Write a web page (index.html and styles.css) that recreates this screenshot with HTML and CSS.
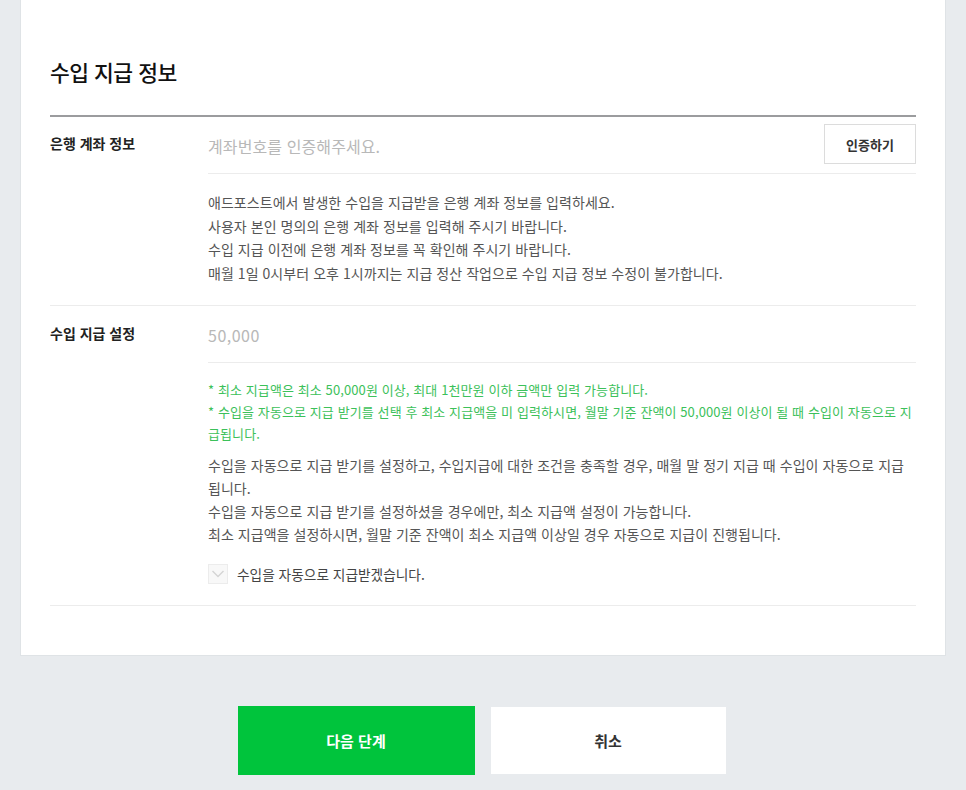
FILE: index.html
```html
<!DOCTYPE html>
<html lang="ko">
<head>
<meta charset="utf-8">
<link rel="stylesheet" href="styles.css">
</head>
<body>
<div class="card">
  <h2 class="title">수입 지급 정보</h2>
  <div class="rows">
    <div class="row">
      <div class="label">은행 계좌 정보</div>
      <div class="field">
        <div class="input-line">
          <span class="placeholder">계좌번호를 인증해주세요.</span>
          <button class="verify">인증하기</button>
        </div>
        <div class="desc">
          <p>애드포스트에서 발생한 수입을 지급받을 은행 계좌 정보를 입력하세요.</p>
          <p>사용자 본인 명의의 은행 계좌 정보를 입력해 주시기 바랍니다.</p>
          <p>수입 지급 이전에 은행 계좌 정보를 꼭 확인해 주시기 바랍니다.</p>
          <p>매월 1일 0시부터 오후 1시까지는 지급 정산 작업으로 수입 지급 정보 수정이 불가합니다.</p>
        </div>
      </div>
    </div>
    <div class="row">
      <div class="label">수입 지급 설정</div>
      <div class="field">
        <div class="input-line amount">
          <span class="placeholder">50,000</span>
        </div>
        <div class="notes">
          <p>* 최소 지급액은 최소 50,000원 이상, 최대 1천만원 이하 금액만 입력 가능합니다.</p>
          <p>* 수입을 자동으로 지급 받기를 선택 후 최소 지급액을 미 입력하시면, 월말 기준 잔액이 50,000원 이상이 될 때 수입이 자동으로 지급됩니다.</p>
        </div>
        <div class="desc desc2">
          <p>수입을 자동으로 지급 받기를 설정하고, 수입지급에 대한 조건을 충족할 경우, 매월 말 정기 지급 때 수입이 자동으로 지급됩니다.</p>
          <p>수입을 자동으로 지급 받기를 설정하셨을 경우에만, 최소 지급액 설정이 가능합니다.</p>
          <p>최소 지급액을 설정하시면, 월말 기준 잔액이 최소 지급액 이상일 경우 자동으로 지급이 진행됩니다.</p>
        </div>
        <label class="check">
          <span class="box"><svg width="14" height="10" viewBox="0 0 14 10"><path d="M1.5 2 L7 7.5 L12.5 2" fill="none" stroke="#d4d4d4" stroke-width="1.4"/></svg></span>
          <span class="check-text">수입을 자동으로 지급받겠습니다.</span>
        </label>
      </div>
    </div>
  </div>
</div>
<div class="actions">
  <button class="btn primary">다음 단계</button>
  <button class="btn secondary">취소</button>
</div>
</body>
</html>
```
FILE: styles.css
```css
* { box-sizing: border-box; }
html, body { margin: 0; padding: 0; }
body {
  background: #e8ebee;
  font-family: "Noto Sans CJK KR", "Noto Sans", "Liberation Sans", sans-serif;
  color: #333;
  width: 966px;
  height: 790px;
  overflow: hidden;
}
p { margin: 0; }
.card {
  margin-left: 20px;
  width: 926px;
  background: #fff;
  border-left: 1px solid #dfe3e6;
  border-right: 1px solid #dfe3e6;
  border-bottom: 1px solid #dfe3e6;
  padding: 56px 29px 49px 29px;
}
.title {
  margin: 0;
  font-size: 21.5px;
  line-height: 32px;
  font-weight: 500;
  color: #111;
  letter-spacing: -0.5px;
}
.rows {
  margin-top: 27px;
  border-top: 2px solid #9b9c9e;
}
.row {
  display: flex;
  border-bottom: 1px solid #ececec;
}
.label {
  width: 158px;
  flex: none;
  padding-top: 16px;
  font-size: 14px;
  line-height: 20px;
  font-weight: 700;
  color: #222;
}
.row:nth-child(2) .label { padding-top: 17px; }
.field { flex: 1; }
.input-line {
  height: 57px;
  display: flex;
  align-items: center;
  justify-content: space-between;
  border-bottom: 1px solid #ececec;
}
.placeholder {
  font-size: 16px;
  color: #b8b8b8;
  padding-top: 1px;
  letter-spacing: 0.1px;
}
.amount .placeholder { letter-spacing: 0.5px; }
.verify {
  width: 92px;
  height: 40px;
  background: #fff;
  border: 1px solid #dcdcdc;
  font-family: inherit;
  font-size: 13px;
  font-weight: 700;
  color: #333;
  padding: 0;
  margin-top: -2px;
}
.desc {
  padding: 17px 0 20px;
  font-size: 14px;
  line-height: 23.5px;
  color: #555;
  letter-spacing: 0.05px;
}
.notes {
  padding-top: 16px;
  font-size: 13px;
  line-height: 22px;
  color: #3cc15a;
  letter-spacing: 0.1px;
}
.desc2 {
  padding: 9px 0 0;
  line-height: 23px;
}
.check {
  display: flex;
  align-items: center;
  margin-top: 18px;
  margin-bottom: 21px;
}
.box {
  width: 20px;
  height: 20px;
  background: #f8f8f8;
  border: 1px solid #ececec;
  display: flex;
  align-items: center;
  justify-content: center;
}
.check-text {
  margin-left: 9px;
  font-size: 13.7px;
  color: #444;
}
.actions {
  display: flex;
  justify-content: center;
  align-items: center;
  gap: 16px;
  margin-top: 50px;
  padding-right: 3px;
}
.btn {
  border: none;
  font-family: inherit;
  font-size: 15px;
  font-weight: 700;
  padding: 0;
}
.primary {
  width: 237px;
  height: 69px;
  background: #00c43c;
  color: #fff;
}
.secondary {
  width: 235px;
  height: 67px;
  background: #fff;
  color: #333;
}
```
